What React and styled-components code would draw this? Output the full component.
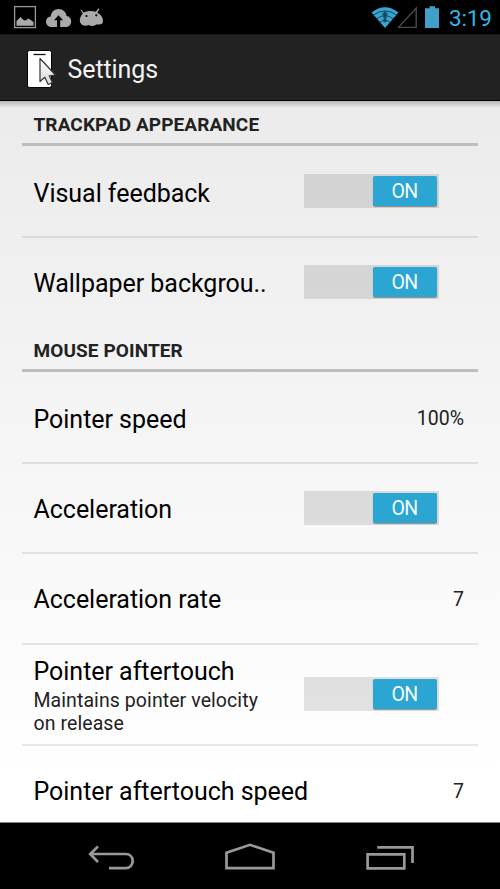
import React from 'react';
import styled, { createGlobalStyle } from 'styled-components';

const GlobalStyle = createGlobalStyle`
  * { box-sizing: border-box; }
  body { margin: 0; background: #000; font-family: Roboto, "Noto Sans", sans-serif; }
`;

const Screen = styled.div`
  width: 500px;
  height: 889px;
  display: flex;
  flex-direction: column;
  overflow: hidden;
  background: #000;
`;

const StatusBar = styled.header`
  flex: 0 0 34px;
  height: 34px;
  min-height: 0;
  display: flex;
  justify-content: space-between;
  background: #000;
`;

const Clock = styled.time`
  width: 52px;
  height: 34px;
  padding-left: 1px;
  font-size: 22.5px;
  line-height: 36px;
  letter-spacing: -0.2px;
  color: #33b5e5;
`;

const StatusGroup = styled.div`
  display: flex;
`;

const ActionBar = styled.div`
  flex: 0 0 67px;
  display: flex;
  align-items: center;
  padding-left: 26px;
  background: #222;
  border-top: 1px solid #161616;
  border-bottom: 1px solid #000;
`;

const Title = styled.h1`
  margin: 3px 0 0 9.5px;
  font-size: 25px;
  font-weight: 400;
  letter-spacing: -0.1px;
  color: #f3f3f3;
`;

const Content = styled.main`
  flex: 0 0 721px;
  overflow: hidden;
  padding: 0 22px;
  background:
    linear-gradient(#b5b5b5, rgba(225, 225, 225, 0) 7px),
    linear-gradient(#ebebeb, #ffffff 93%);
`;

const SectionTitle = styled.h2`
  height: ${(p) => p.$height}px;
  margin: 0;
  padding: 0 0 8px 11.5px;
  display: flex;
  align-items: flex-end;
  border-bottom: 3px solid #bdbdbd;
  font-size: 19px;
  line-height: 20px;
  font-weight: 700;
  letter-spacing: 0.1px;
  color: #222;
`;

const Row = styled.div`
  height: ${(p) => p.$height}px;
  display: flex;
  align-items: center;
  justify-content: space-between;
  padding: 0 14px 0 11.5px;
  border-bottom: ${(p) => (p.$last ? 0 : 2)}px solid rgba(0, 0, 0, 0.09);
`;

const Labels = styled.div`
  padding-top: ${(p) => p.$offset}px;
`;

const Label = styled.div`
  font-size: 25px;
  line-height: 30px;
  letter-spacing: -0.03px;
  white-space: nowrap;
  color: #000;
`;

const Summary = styled.div`
  width: 245px;
  margin-top: 2px;
  font-size: 19.5px;
  line-height: 23px;
  letter-spacing: 0.08px;
  color: #222;
`;

const Value = styled.span`
  padding-top: ${(p) => p.$offset}px;
  font-size: 19.5px;
  letter-spacing: 0;
  color: #222;
`;

const Track = styled.div`
  width: 135px;
  height: 34px;
  margin: ${(p) => p.$top}px 25px 0 0;
  padding: 2px 2px 2px 0;
  display: flex;
  justify-content: flex-end;
  background: rgba(0, 0, 0, 0.11);
`;

const Thumb = styled.div`
  width: 64px;
  height: 30px;
  border-radius: 2px;
  background: #2ba5d1;
  box-shadow: 0 1px 1px rgba(0, 0, 0, 0.35);
  color: #f5fbfd;
  font-size: 19.5px;
  line-height: 32px;
  letter-spacing: -0.6px;
  padding-right: 1px;
  text-align: center;
`;

const NavBar = styled.nav`
  flex: 1;
  border-top: 1px solid #888;
  background: #000;
`;

const NOTIFICATION_GREY = '#aaa';

function NotificationIcons() {
  return (
    <svg width="120" height="34" viewBox="0 0 120 34">
      <rect x="14.6" y="6.6" width="20.8" height="21" fill="none" stroke="#999" strokeWidth="1.3" />
      <path d="M16.5 25.8V21l4-4 3 3 2 .5 3-2 5 3.500v3.800z" fill={NOTIFICATION_GREY} />
      <path
        d="M51.500 27C48 26.800 46 24.500 46 21.700c0-3 2-5 4.700-5.200C51 12 54.500 9 58.600 9c4.200 0 7.500 3 8 7.100 2.700.3 4.600 2.500 4.600 5.300 0 3-2 5.400-5.400 5.600H60.200V20.200h2.900L58.500 15.300 54 20.200h3V27z"
        fill={NOTIFICATION_GREY}
      />
      <path
        d="M81 9.200l2.700 3.300c3.300-1.700 8.300-2 12-.8L98.600 8.300l.9.600-2.200 3.800c3.500 1.600 6 5.200 5.700 8.600-.2 2.400-1.500 3.300-4 3.300-1.600 0-2.400-.4-3.500.5-2 1.300-5 1.200-6.700-.2-1.800 1-5 1.200-6.800-.2-3-2.200-3-7 .8-11.200L80.600 10z"
        fill={NOTIFICATION_GREY}
      />
      <circle cx="86.500" cy="16" r="1.100" fill="#000" />
      <circle cx="96.300" cy="15.300" r="1.100" fill="#000" />
    </svg>
  );
}

function SignalIcons() {
  return (
    <svg width="78" height="34" viewBox="370 0 78 34">
      <path d="M371.500 12.500Q385 2 398.500 12.500L385 28z" fill="#3aa5d0" />
      <g fill="none" stroke="#0b2f3e" strokeWidth="0.8">
        <path d="M373 15.300Q385 6.500 397 15.300" />
        <path d="M376.500 19Q385 12.200 393.500 19" />
        <path d="M379.500 22.600Q385 18 390.500 22.600" />
      </g>
      <path d="M385 11l3.500 3.500-2 .2v7.500h-3v-7.500l-2-.2z" fill="#134152" opacity="0.85" />
      <path d="M398.500 27.400L416.200 8v19.400z" fill="none" stroke="#4c4c4c" strokeWidth="1.400" />
      <path d="M429.500 6.300h5.500v2h4V28h-14V8.300h4.500z" fill="#429fc8" />
    </svg>
  );
}

function AppIcon() {
  return (
    <svg width="32" height="42" viewBox="26 46 32 42">
      <defs>
        <linearGradient id="cursorFill" x1="0" y1="0" x2="0" y2="1">
          <stop offset="0" stopColor="#fff" />
          <stop offset="1" stopColor="#d8d8d8" />
        </linearGradient>
      </defs>
      <rect x="27.500" y="49.500" width="24" height="37" rx="2" fill="#fff" stroke="#000" />
      <path d="M33.500 53.500h12" stroke="#111" strokeWidth="1.300" />
      <path
        d="M40 57.500V80.500l4.800-4.300 3.400 7.300 4.300-2-3.300-6.700 6.300-.8z"
        fill="url(#cursorFill)"
        stroke="#333"
        strokeWidth="1.200"
        strokeLinejoin="round"
      />
    </svg>
  );
}

function NavIcons() {
  return (
    <svg width="500" height="66" viewBox="0 823 500 66" fill="none" stroke="#999" strokeWidth="2.700">
      <path d="M98 846.500l-7.800 7.500 7.800 8M91 854h34.500c4.300 0 7.200 3 7.200 7s-2.900 7.200-7.200 7.200H109" />
      <path d="M226.500 868.200V852.700L250 844.800l23.500 7.900v15.500z" />
      <path d="M367.600 854.300h36.700v14h-36.700zM377.300 847.300h35.200V863" />
    </svg>
  );
}

function Switch({ top = 0 }) {
  return (
    <Track $top={top}>
      <Thumb>ON</Thumb>
    </Track>
  );
}

function Setting({ label, summary, height, offset = 4, last, children }) {
  return (
    <Row $height={height} $last={last}>
      <Labels $offset={offset}>
        <Label>{label}</Label>
        {summary && <Summary>{summary}</Summary>}
      </Labels>
      {children}
    </Row>
  );
}

export default function App() {
  return (
    <>
      <GlobalStyle />
      <Screen>
        <StatusBar>
          <NotificationIcons />
          <StatusGroup>
            <SignalIcons />
            <Clock>3:19</Clock>
          </StatusGroup>
        </StatusBar>
        <ActionBar>
          <AppIcon />
          <Title>Settings</Title>
        </ActionBar>
        <Content>
          <SectionTitle $height={45}>TRACKPAD APPEARANCE</SectionTitle>
          <Setting label="Visual feedback" height={92} offset={5}>
            <Switch />
          </Setting>
          <Setting label="Wallpaper backgrou.." height={88} last>
            <Switch top={-1} />
          </Setting>
          <SectionTitle $height={46}>MOUSE POINTER</SectionTitle>
          <Setting label="Pointer speed" height={92} offset={5}>
            <Value $offset={3}>100%</Value>
          </Setting>
          <Setting label="Acceleration" height={90}>
            <Switch />
          </Setting>
          <Setting label="Acceleration rate" height={91} offset={3}>
            <Value $offset={1}>7</Value>
          </Setting>
          <Setting
            label="Pointer aftertouch"
            summary={<>Maintains pointer velocity<br />on release</>}
            height={101}
            offset={2}
          >
            <Switch top={-2} />
          </Setting>
          <Setting label="Pointer aftertouch speed" height={90} offset={2} last>
            <Value $offset={1}>7</Value>
          </Setting>
        </Content>
        <NavBar>
          <NavIcons />
        </NavBar>
      </Screen>
    </>
  );
}
